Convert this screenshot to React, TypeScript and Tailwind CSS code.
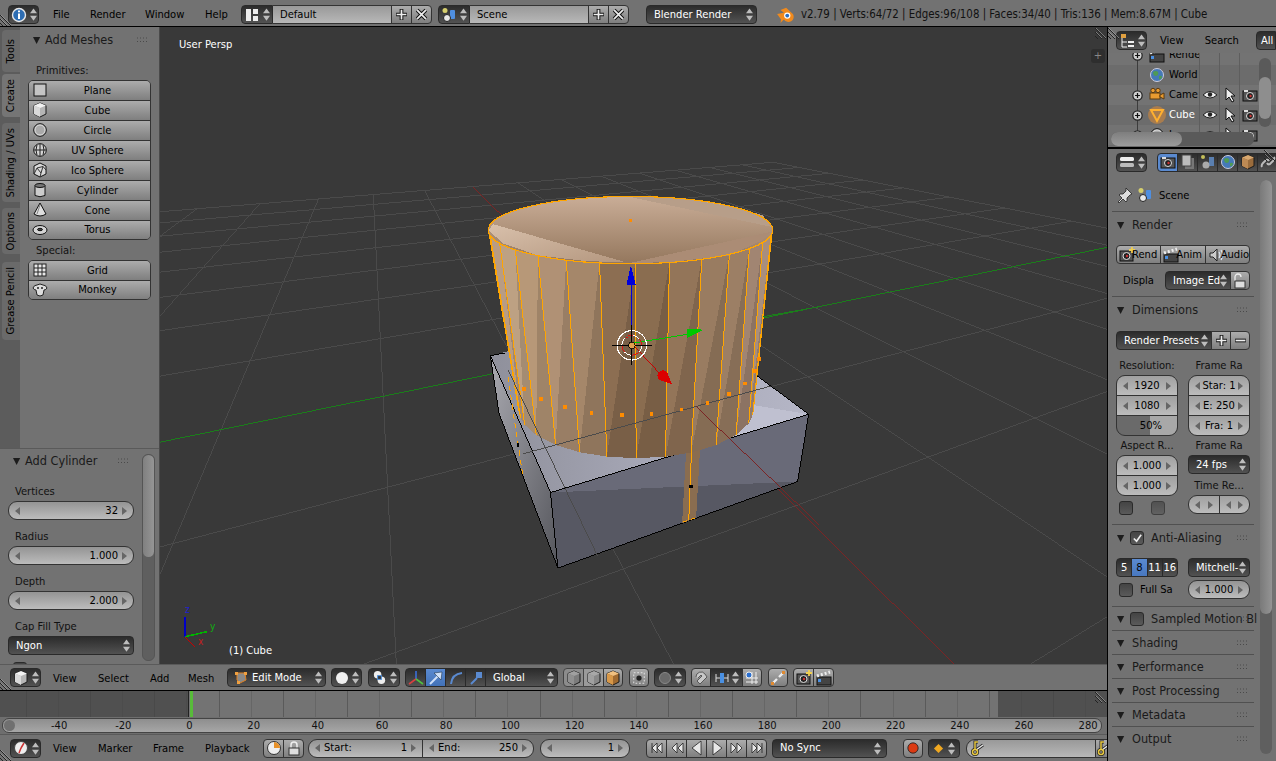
import type { ReactNode } from 'react';

const light = 'bg-linear-to-b from-[#acacac] to-[#7f7f7f] border border-[#333] text-black';
const dark = 'bg-linear-to-b from-[#2c2c2c] to-[#525252] border border-[#2a2a2a] text-white';
const num = 'bg-linear-to-b from-[#949494] to-[#bcbcbc] border border-[#333] text-black';

const I = ({ children, size = 16 }: { children: ReactNode; size?: number }) => (
    <svg viewBox="0 0 16 16" width={size} height={size} className="block shrink-0">
        {children}
    </svg>
);

const UpDown = ({ c = '#bdbdbd' }: { c?: string }) => (
    <svg viewBox="0 0 8 14" width="7" height="13" className="block shrink-0">
        <polygon points="4,0 8,5.5 0,5.5" fill={c} />
        <polygon points="4,14 8,8.5 0,8.5" fill={c} />
    </svg>
);

const Hatch = ({ className }: { className: string }) => (
    <svg viewBox="0 0 12 12" width="12" height="12" className={'absolute ' + className}>
        <path d="M0 1L11 12M0 5L7 12M0 9L3 12" stroke="#222" strokeWidth="1" />
        <path d="M1 1L11 11M1 5L7 11" stroke="#aaa" strokeWidth="0.6" />
    </svg>
);

const Tri = ({ open = true }: { open?: boolean }) => (
    <svg viewBox="0 0 10 10" width="9" height="9" className="block shrink-0">
        {open ? <polygon points="0,1 8,1 4,9" fill="#1c1c1c" /> : <polygon points="1,0 9,4.5 1,9" fill="#1c1c1c" />}
    </svg>
);

const Dots = () => (
    <svg viewBox="0 0 11 6" width="11" height="6" className="block shrink-0">
        <path d="M0 1h11M0 4.500h11" stroke="#4a4a4a" strokeDasharray="1 2" />
    </svg>
);

const Arrows = ({ c = '#666' }: { c?: string }) => (
    <>
        <svg viewBox="0 0 5 8" width="5" height="8" className="absolute left-[6px] top-1/2 -translate-y-1/2">
            <polygon points="5,0 5,8 0,4" fill={c} />
        </svg>
        <svg viewBox="0 0 5 8" width="5" height="8" className="absolute right-[6px] top-1/2 -translate-y-1/2">
            <polygon points="0,0 0,8 5,4" fill={c} />
        </svg>
    </>
);

/* icons */
const CubeIcon = ({ a = '#f2f2f2', b = '#b5b5b5', c = '#d9d9d9' }: { a?: string; b?: string; c?: string }) => (
    <I>
        <polygon points="8,1 14,3.500 14,12 8,15 2,12 2,3.500" fill={b} stroke="#1a1a1a" />
        <polygon points="8,1 14,3.500 8,6 2,3.500" fill={a} />
        <polygon points="2,3.500 8,6 8,15 2,12" fill={c} />
    </I>
);
const PlaneIcon = () => (
    <I>
        <rect x="2" y="2" width="12" height="12" fill="#c4c4c4" stroke="#111" />
    </I>
);
const CircleIcon = () => (
    <I>
        <circle cx="8" cy="8" r="6.300" fill="#aaa" stroke="#111" />
        <circle cx="8" cy="8" r="5" fill="none" stroke="#ddd" />
    </I>
);
const UvIcon = () => (
    <I>
        <circle cx="8" cy="8" r="6.300" fill="#d4d4d4" stroke="#111" />
        <path d="M2 8h12M8 2v12M5 3q-2 5 0 10M11 3q2 5 0 10" stroke="#222" fill="none" />
    </I>
);
const IcoIcon = () => (
    <I>
        <polygon points="8,1 14,4 14,12 8,15 2,12 2,4" fill="#d8d8d8" stroke="#111" />
        <path d="M5 6L11 4.500L9 11ZM5 6L2 12M9 11L8 15M11 4.500L14 8" stroke="#333" fill="none" />
    </I>
);
const CylIcon = () => (
    <I>
        <path d="M3 3.500v10q5 2.500 10 0v-10" fill="#ccc" stroke="#111" />
        <ellipse cx="8" cy="3.500" rx="5" ry="2" fill="#777" stroke="#111" />
    </I>
);
const ConeIcon = () => (
    <I>
        <path d="M8 1L2 12q6 4 12 0Z" fill="#ddd" stroke="#111" />
        <path d="M8 3L5 12" stroke="#888" />
    </I>
);
const TorusIcon = () => (
    <I>
        <ellipse cx="8" cy="8" rx="7" ry="4.500" fill="#d5d5d5" stroke="#111" />
        <ellipse cx="8" cy="7.500" rx="2.500" ry="1.200" fill="#444" stroke="#111" />
    </I>
);
const GridIcon = () => (
    <I>
        <rect x="2" y="2" width="12" height="12" fill="#e8e8e8" stroke="#222" />
        <path d="M6 2v12M10 2v12M2 6h12M2 10h12" stroke="#222" />
    </I>
);
const MonkeyIcon = () => (
    <I>
        <path d="M5 3q3-2 6 0q3 0 4 3q-1 2-3 2l-1 5q-3 2-6 0l-1-5q-2 0-3-2q1-3 4-3Z" fill="#ddd" stroke="#222" />
        <circle cx="6" cy="6" r="1" fill="#222" />
        <circle cx="10" cy="6" r="1" fill="#222" />
    </I>
);
const InfoIcon = () => (
    <I>
        <circle cx="8" cy="8" r="6.500" fill="#2d6db3" stroke="#e8e8e8" strokeWidth="1.400" />
        <path d="M8 3.500v1.800M8 6.500v5.500" stroke="#fff" strokeWidth="2" />
    </I>
);
const LayoutIcon = () => (
    <I>
        <rect x="2" y="2" width="5" height="12" fill="#eee" />
        <rect x="9" y="2" width="5" height="5" fill="#eee" />
        <rect x="9" y="9" width="5" height="5" fill="#eee" />
    </I>
);
const SceneIcon = () => (
    <I>
        <circle cx="4" cy="3.500" r="2.500" fill="#d6cf6d" />
        <rect x="9" y="3" width="5" height="9" rx="1" fill="#4f8fe0" />
        <circle cx="6" cy="11" r="3.500" fill="#e8e8e8" stroke="#222" />
    </I>
);
const Blender = () => (
    <I size={18}>
        <path d="M1 7l6-1-3-2.500 5-2 6 5.500a4.500 4.500 0 0 1-8 5l-3 3 .5-3-3.500-5Z" fill="#f08a1d" />
        <circle cx="10" cy="8.500" r="2.800" fill="#fff" />
        <circle cx="10" cy="8.500" r="1.700" fill="#2c6ebc" />
    </I>
);
const Plus = () => (
    <svg viewBox="0 0 12 12" width="13" height="13" className="block">
        <path d="M6 1v10M1 6h10" stroke="#111" strokeWidth="3.400" />
        <path d="M6 1.500v9M1.500 6h9" stroke="#eee" strokeWidth="1.600" />
    </svg>
);
const Cross = () => (
    <svg viewBox="0 0 12 12" width="13" height="13" className="block">
        <path d="M2 2l8 8M10 2l-8 8" stroke="#111" strokeWidth="3.400" />
        <path d="M2 2l8 8M10 2l-8 8" stroke="#eee" strokeWidth="1.600" />
    </svg>
);
const CameraIcon = () => (
    <I>
        <rect x="1" y="4" width="14" height="10" fill="#555" stroke="#111" />
        <rect x="2" y="3" width="4" height="2" fill="#ddd" />
        <circle cx="8" cy="9" r="3.500" fill="#222" stroke="#ddd" />
        <circle cx="8.500" cy="9" r="1.200" fill="#c33" />
    </I>
);
const RenderCam = () => (
    <I>
        <rect x="1" y="4" width="13" height="10" fill="#555" stroke="#111" />
        <circle cx="7.500" cy="9" r="3.500" fill="#222" stroke="#ddd" />
        <circle cx="8" cy="9" r="1.200" fill="#c33" />
        <path d="M13 0v6M10 3h6" stroke="#f0d050" strokeWidth="1.800" />
    </I>
);
const Clapper = () => (
    <I>
        <rect x="1" y="7" width="14" height="8" fill="#444" stroke="#111" />
        <path d="M1 6L14 2" stroke="#eee" strokeWidth="3" strokeDasharray="2 2" />
        <rect x="2" y="9" width="3" height="3" fill="#4a90e2" />
    </I>
);
const Speaker = () => (
    <I>
        <polygon points="2,6 5,6 9,2 9,14 5,10 2,10" fill="#ccc" stroke="#222" />
        <path d="M11 5q2 3 0 6M13 3q3 5 0 10" stroke="#dfe8f5" strokeWidth="1.200" fill="none" />
    </I>
);
const Pin = () => (
    <I>
        <path d="M9 1l6 6-2 1-3 3v3l-1 1-3-3-4 4-1-1 4-4-3-3 1-1h3l3-3Z" fill="#ddd" stroke="#222" strokeWidth="0.800" />
    </I>
);
const Eye = () => (
    <I>
        <path d="M1 8q7-7 14 0q-7 6-14 0Z" fill="#eee" stroke="#222" />
        <circle cx="8" cy="7.500" r="2.200" fill="#222" />
    </I>
);
const Pointer = () => (
    <I>
        <polygon points="4,1 4,13 7,10 10,15 12,14 9,9 13,9" fill="#eee" stroke="#111" />
    </I>
);
const WorldIcon = () => (
    <I>
        <circle cx="8" cy="8" r="6.500" fill="#4579b8" stroke="#ccd" />
        <path d="M4 5q3-2 5 0q1 3-2 4q-3 0-3-4ZM10 9q3-1 3 1q-1 3-3 2Z" fill="#4f9a55" />
    </I>
);
const ChainIcon = () => (
    <I>
        <path d="M2 13q-1-2 1-4l3-3q2-1 3 1M14 3q1 2-1 4l-3 3q-2 1-3-1" fill="none" stroke="#bbb" strokeWidth="2" />
    </I>
);
const CamOrange = () => (
    <I>
        <rect x="1" y="6" width="10" height="6" fill="#e89a30" stroke="#5a3a10" />
        <circle cx="4" cy="3.500" r="2.200" fill="#e89a30" stroke="#5a3a10" />
        <circle cx="9" cy="3.500" r="2.200" fill="#e89a30" stroke="#5a3a10" />
        <polygon points="11,8 15,6 15,12 11,10" fill="#e89a30" stroke="#5a3a10" />
    </I>
);
const CubeObj = () => (
    <svg viewBox="0 0 18 18" width="18" height="18" className="block shrink-0">
        <circle cx="9" cy="9" r="9" fill="#a87c4e" />
        <path d="M3 4h12L9 15Z" fill="none" stroke="#ffb030" strokeWidth="2" />
    </svg>
);
const KeyIcon = () => (
    <I>
        <path d="M6 10l7-5" stroke="#222" strokeWidth="3" fill="none" />
        <circle cx="5" cy="12" r="2.500" fill="none" stroke="#222" strokeWidth="3" />
        <path d="M5 10V2h3" stroke="#222" strokeWidth="3" fill="none" />
        <path d="M6 10l7-5" stroke="#e8e8e8" strokeWidth="1.500" fill="none" />
        <circle cx="5" cy="12" r="2.500" fill="none" stroke="#e8c840" strokeWidth="1.500" />
        <path d="M5 10V2h3" stroke="#e8c840" strokeWidth="1.500" fill="none" />
    </I>
);

/* small widgets */
const Menu = ({ items, widths }: { items: string[]; widths: string[] }) => (
    <>
        {items.map((t, i) => (
            <span key={t} className={'shrink-0 text-black ' + widths[i]}>
                {t}
            </span>
        ))}
    </>
);

const EditorBtn = ({ children }: { children: ReactNode }) => (
    <div className={'flex h-[19px] w-[31px] shrink-0 items-center justify-center gap-[3px] rounded-[4px] ' + dark}>
        {children}
        <UpDown />
    </div>
);

const Drop = ({ w, text, icon, className = '' }: { w: string; text: string; icon?: ReactNode; className?: string }) => (
    <div className={'flex h-[19px] shrink-0 items-center rounded-[4px] pl-[6px] pr-[3px] ' + dark + ' ' + w + ' ' + className}>
        {icon}
        <span className="ml-[1px] min-w-0 flex-1 overflow-hidden whitespace-nowrap">{text}</span>
        <UpDown />
    </div>
);

const Seg = ({ children, w = 'w-[21px]', cls = light, round = '' }: { children?: ReactNode; w?: string; cls?: string; round?: string }) => (
    <div className={'flex h-[19px] shrink-0 items-center justify-center -ml-px first:ml-0 ' + w + ' ' + cls + ' ' + round}>{children}</div>
);

const Field = ({ value, className = '', label, left }: { value: string; className?: string; label?: string; left?: boolean }) => (
    <div className={'relative flex h-[19px] items-center rounded-[9px] px-[15px] ' + num + ' ' + (left ? 'justify-center ' : 'justify-end ') + className}>
        <Arrows />
        {label && <span className="mr-auto">{label}</span>}
        <span>{value}</span>
    </div>
);

const Stack = ({ rows }: { rows: string[] }) => (
    <div className="flex flex-col overflow-hidden rounded-[9px] border border-[#333] bg-[#333] gap-px">
        {rows.map((r) => (
            <div key={r} className="relative flex h-[19px] items-center justify-center bg-linear-to-b from-[#a0a0a0] to-[#bcbcbc] text-black">
                <Arrows />
                {r}
            </div>
        ))}
    </div>
);

const Mesh = ({ icon, label }: { icon: ReactNode; label: string }) => (
    <div className="relative flex h-[20px] first:h-[19px] last:h-[19px] items-center justify-center border-t border-[#333] first:border-t-0 bg-linear-to-b from-[#acacac] to-[#7f7f7f] pl-[16px] text-black">
        <span className="absolute left-[3px] top-[1px]">{icon}</span>
        {label}
    </div>
);

const Section = ({ title, open, check, children, off }: { title: string; open?: boolean; check?: boolean; off?: boolean; children?: ReactNode }) => (
    <div className="border-t border-[#505050]">
        <div className={'flex items-center pl-[5px] pr-[6px] ' + (children ? 'h-[26px]' : 'h-[23px] pt-[1px]')}>
            <Tri open={open} />
            {check && (
                <span className="ml-[4px] flex h-[14px] w-[14px] shrink-0 items-center justify-center rounded-[3px] bg-linear-to-b from-[#444] to-[#5a5a5a] border border-[#2a2a2a]">
                    <svg viewBox="0 0 12 12" width="11" height="11">
                        <path d="M2 6l3 3 5-7" stroke="#eee" strokeWidth="1.800" fill="none" />
                    </svg>
                </span>
            )}
            {off && <span className="ml-[4px] h-[14px] w-[14px] shrink-0 rounded-[3px] bg-linear-to-b from-[#444] to-[#5a5a5a] border border-[#2a2a2a]" />}
            <span className={'w-0 grow whitespace-nowrap text-[12.6px] text-[#1a1a1a] ' + (check || off ? 'ml-[7px]' : 'ml-[6px]')}>{title}</span>
            <Dots />
        </div>
        {children}
    </div>
);

const Box = ({ className = '' }: { className?: string }) => <span className={'block h-[14px] w-[14px] rounded-[3px] border border-[#2a2a2a] bg-linear-to-b from-[#444] to-[#5a5a5a] ' + className} />;

/* 3D view */
const O = [633, 345];
const VX = [368, 82];
const VY = [2004, 63];
const project = (x: number, y: number) => {
    const t = -0.19 * x;
    const s = 0.077 * y;
    const w = 1 + t + s;
    return [(O[0] + t * VX[0] + s * VY[0]) / w, (O[1] + t * VX[1] + s * VY[1]) / w, w];
};
const segment = (x1: number, y1: number, x2: number, y2: number) => {
    let a = project(x1, y1);
    let b = project(x2, y2);
    const minW = 0.06;
    if (a[2] < minW || b[2] < minW) {
        if (a[2] < minW && b[2] < minW) return null;
        const k = (minW - a[2]) / (b[2] - a[2]);
        const c = project(x1 + (x2 - x1) * k, y1 + (y2 - y1) * k);
        if (a[2] < minW) a = c;
        else b = c;
    }
    return `M${a[0].toFixed(1)} ${a[1].toFixed(1)}L${b[0].toFixed(1)} ${b[1].toFixed(1)}`;
};
const gridPath = (() => {
    let d = '';
    for (let i = -8; i <= 8; i++) {
        if (i !== 0) {
            d += segment(i, -8, i, 8) ?? '';
            d += segment(-8, i, 8, i) ?? '';
        }
    }
    return d;
})();

const topY = (x: number) => 150 + 100 * Math.sqrt(Math.max(0, 1 - ((x - 483) / 427) ** 2));
const botY = (x: number) => 690 + 145 * Math.sqrt(Math.max(0, 1 - ((x - 500) / 352) ** 2));
const tops = [58, 62, 90, 137, 205, 290, 390, 497, 600, 697, 780, 840, 880, 905, 908];
const bots = [150, 153, 165, 200, 258, 330, 412, 500, 588, 665, 740, 800, 838, 850, 852];
const faceColors = ['#bda38c', '#b89c84', '#bda183', '#b79878', '#b09175', '#a5876a', '#8c6e52', '#8a6d50', '#937559', '#997c61', '#9c7f65', '#a18572', '#a88e7e', '#ae968a'];
const bottomDots = [[163, 627], [214, 657], [285, 681], [365, 698], [456, 704], [546, 701], [636, 688], [714, 668], [778, 641], [827, 610], [856, 573], [868, 536]];

const Scene3D = () => (
    <svg viewBox="160 27 948 637" className="block h-full w-full" shapeRendering="crispEdges">
        <defs>
            <linearGradient id="cap" x1="0" y1="0" x2="0" y2="1">
                <stop offset="0" stopColor="#c9ad97" />
                <stop offset="1" stopColor="#94775d" />
            </linearGradient>
            <linearGradient id="wedge" x1="0" y1="0" x2="1" y2="1">
                <stop offset="0" stopColor="#d8c0ab" />
                <stop offset="1" stopColor="#b4977f" />
            </linearGradient>
            <linearGradient id="cubeTop" x1="0" y1="0" x2="1" y2="0">
                <stop offset="0" stopColor="#8f909b" />
                <stop offset="0.5" stopColor="#a6a7b6" />
                <stop offset="1" stopColor="#b5b6c6" />
            </linearGradient>
            <linearGradient id="cubeLeft" x1="0" y1="0" x2="1" y2="1">
                <stop offset="0" stopColor="#a9a9b0" />
                <stop offset="1" stopColor="#55565c" />
            </linearGradient>
        </defs>
        <path d={gridPath} stroke="#4a4a4a" strokeWidth="1" fill="none" />
        <path d={segment(0, -8, 0, 8) ?? ''} stroke="#1b7d1b" fill="none" />
        <path d={segment(-8, 0, 2.9, 0) ?? ''} stroke="#7c2424" fill="none" />
        <g transform="translate(470 180) scale(0.33333)">
            {/* box */}
            <polygon points="62,527 600,391 1018,703 243,938" fill="url(#cubeTop)" />
            <polygon points="850,675 1018,703 790,780" fill="#bfc0d0" />
            <polygon points="243,938 1018,703 985,905 265,1165" fill="#696a78" />
            <polygon points="243,938 985,905 265,1165" fill="#575863" />
            <polygon points="62,527 243,938 265,1165 88,700" fill="url(#cubeLeft)" />
            <path d="M62 527L243 938L1018 703L985 905L265 1165L243 938M265 1165L88 700L62 527L105 519M860 585L1018 703" fill="none" stroke="#000" strokeWidth="3" />
            {/* strip of the cylinder that comes through the box */}
            <polygon points="650,815 692,805 680,1015 638,1030" fill="#8a6d50" />
            <path d="M666 815L658 1022" stroke="#ffa500" strokeWidth="3" />
            <path d="M640 1027L680 1014" stroke="#ffa500" strokeWidth="3" strokeDasharray="12 14" />
            <path d="M115 590L160 890" stroke="#ffa500" strokeWidth="3" strokeDasharray="16 12" />
            <rect x="141" y="790" width="8" height="11" fill="#000" />
            <rect x="660" y="914" width="11" height="11" fill="#000" />
            {/* cylinder sides */}
            {faceColors.map((c, i) => {
                const a = [tops[i], topY(tops[i])];
                const b = [tops[i + 1], topY(tops[i + 1])];
                const e = [bots[i + 1], botY(bots[i + 1])];
                const f = [bots[i], botY(bots[i])];
                return (
                    <g key={i}>
                        <polygon points={`${a} ${b} ${e} ${f}`} fill={c} />
                        <polygon points={`${b} ${e} ${f}`} fill="#000" opacity="0.13" />
                    </g>
                );
            })}
            {tops.map((t, i) => (
                <path key={t} d={`M${t} ${topY(t)}L${bots[i]} ${botY(bots[i])}`} stroke="#ffa500" strokeWidth="3" fill="none" />
            ))}
            {/* cap */}
            <ellipse cx="483" cy="150" rx="427" ry="101" fill="url(#cap)" />
            <polygon points="57,150 70,132 470,247 350,243 205,226 100,190" fill="url(#wedge)" />
            <polygon points="470,48 905,140 880,105 790,80 640,55" fill="#b79e89" />
            <polygon points="480,249 905,155 880,180 780,226 600,246" fill="#ab8c75" />
            <ellipse cx="483" cy="150" rx="427" ry="101" fill="none" stroke="#ffa500" strokeWidth="3.500" />
            <rect x="478" y="116" width="10" height="10" fill="#ff8c00" />
            {/* grid lines in front */}
            <path d="M160 822L905 618" stroke="#4b4b4b" strokeWidth="3" />
            <path d="M115 570L385 1130" stroke="#4b4b4b" strokeWidth="3" />
            <path d="M680 680L1050 1035" stroke="#7c2424" strokeWidth="3" />
            <path d="M880 410L1050 380" stroke="#1b7d1b" strokeWidth="3" />
            {bottomDots.map(([x, y]) => (
                <rect key={x} x={x - 5} y={y - 5} width="11" height="11" fill="#ff8c00" />
            ))}
            {/* manipulator */}
            <path d="M487 490L487 300" stroke="#0000dc" strokeWidth="3" />
            <polygon points="484,255 499,315 471,315" fill="#0000dc" />
            <path d="M487 490L660 462" stroke="#00c800" strokeWidth="3" />
            <polygon points="704,449 652,474 652,446" fill="#00c800" />
            <path d="M487 490L570 580" stroke="#c80000" strokeWidth="3" />
            <circle cx="580" cy="587" r="16" fill="#dc0000" />
            <polygon points="607,612 570,600 592,575" fill="#dc0000" />
            {/* 3d cursor */}
            <circle cx="487" cy="496" r="44" fill="none" stroke="#fff" strokeWidth="3.500" />
            <circle cx="487" cy="496" r="30" fill="none" stroke="#fff" strokeWidth="3" strokeDasharray="24 24" />
            <circle cx="487" cy="496" r="30" fill="none" stroke="#e01010" strokeWidth="3" strokeDasharray="24 24" strokeDashoffset="24" />
            <path d="M427 496H547M487 436V556" stroke="#000" strokeWidth="3" />
            <circle cx="487" cy="496" r="10" fill="#e0a050" stroke="#000" strokeWidth="2.500" />
        </g>
        {/* axis widget */}
        <path d="M185 637V617" stroke="#0000c8" strokeWidth="1.500" />
        <path d="M185 637L207 632" stroke="#00b400" strokeWidth="1.500" />
        <path d="M185 637L195 647" stroke="#c80000" strokeWidth="1" />
    </svg>
);

export default function App() {
    const ticks = ['-40', '-20', '0', '20', '40', '60', '80', '100', '120', '140', '160', '180', '200', '220', '240', '260', '280'];
    const lines = Array.from({ length: 35 }, (_, i) => i);

    return (
        <div className="relative flex h-[761px] w-[1276px] flex-col overflow-hidden bg-[#727272] font-['DejaVu_Sans_Condensed','DejaVu_Sans',sans-serif] text-[11.1px] leading-none">
            {/* top bar */}
            <header className="relative flex h-[27px] shrink-0 items-center border-b border-black bg-[#727272] pl-[8px] pt-[3px]">
                <Hatch className="left-0 bottom-0" />
                <EditorBtn>
                    <InfoIcon />
                </EditorBtn>
                <span className="w-[14px] shrink-0" />
                <Menu items={['File', 'Render', 'Window', 'Help']} widths={['w-[37px]', 'w-[55px]', 'w-[60px]', 'w-[36px]']} />
                <div className="flex">
                    <div className={'flex h-[19px] w-[32px] items-center justify-center gap-[3px] rounded-l-[4px] ' + dark}>
                        <LayoutIcon />
                        <UpDown />
                    </div>
                    <div className="flex h-[19px] w-[119px] items-center bg-linear-to-b from-[#999] to-[#b8b8b8] border-y border-r border-[#333] pl-[7px] text-black">Default</div>
                    <Seg>
                        <Plus />
                    </Seg>
                    <Seg round="rounded-r-[4px]">
                        <Cross />
                    </Seg>
                </div>
                <div className="ml-[6px] flex">
                    <div className={'flex h-[19px] w-[32px] items-center justify-center gap-[3px] rounded-l-[4px] ' + dark}>
                        <SceneIcon />
                        <UpDown />
                    </div>
                    <div className="flex h-[19px] w-[119px] items-center bg-linear-to-b from-[#999] to-[#b8b8b8] border-y border-r border-[#333] pl-[7px] text-black">Scene</div>
                    <Seg>
                        <Plus />
                    </Seg>
                    <Seg round="rounded-r-[4px]">
                        <Cross />
                    </Seg>
                </div>
                <Drop w="w-[111px]" text="Blender Render" className="ml-[17px]" />
                <span className="ml-[19px]">
                    <Blender />
                </span>
                <span className="ml-[7px] whitespace-nowrap text-[11.4px] text-[#111]">v2.79 | Verts:64/72 | Edges:96/108 | Faces:34/40 | Tris:136 | Mem:8.67M | Cube</span>
            </header>

            <div className="flex min-h-0 flex-1">
                {/* left: 3D view and timeline */}
                <div className="flex w-[1107px] shrink-0 flex-col">
                    <div className="flex h-[637px] shrink-0">
                        <aside className="flex w-[160px] shrink-0 flex-col border-r border-[#4a4a4a]">
                            <div className="flex h-[421px] shrink-0">
                                <nav className="flex w-[20px] shrink-0 flex-col items-end bg-[#5c5c5c] text-black">
                                    {[
                                        ['Tools', 'h-[42px] mt-[3px] bg-[#6a6a6a]'],
                                        ['Create', 'h-[43px] mt-[2px] bg-[#757575]'],
                                        ['Shading / UVs', 'h-[79px] mt-[6px] bg-[#6a6a6a]'],
                                        ['Options', 'h-[46px] mt-[6px] bg-[#6a6a6a]'],
                                        ['Grease Pencil', 'h-[78px] mt-[8px] bg-[#6a6a6a]'],
                                    ].map(([t, c]) => (
                                        <div key={t} className={'flex w-[18px] items-center justify-center rounded-l-[4px] ' + c}>
                                            <span className="whitespace-nowrap [writing-mode:vertical-rl] rotate-180">{t}</span>
                                        </div>
                                    ))}
                                </nav>
                                <div className="flex-1 bg-[#727272] pl-[8px] pr-[8px]">
                                    <div className="flex h-[26px] items-center pl-[5px] pr-[3px]">
                                        <Tri />
                                        <span className="ml-[3px] text-[12.6px] text-[#1a1a1a]">Add Meshes</span>
                                        <span className="ml-auto">
                                            <Dots />
                                        </span>
                                    </div>
                                    <div className="mt-[12px] h-[12px] pl-[8px] text-[#111]">Primitives:</div>
                                    <div className="mt-[3px] w-[123px] overflow-hidden rounded-[5px] border border-[#333]">
                                        <Mesh icon={<PlaneIcon />} label="Plane" />
                                        <Mesh icon={<CubeIcon />} label="Cube" />
                                        <Mesh icon={<CircleIcon />} label="Circle" />
                                        <Mesh icon={<UvIcon />} label="UV Sphere" />
                                        <Mesh icon={<IcoIcon />} label="Ico Sphere" />
                                        <Mesh icon={<CylIcon />} label="Cylinder" />
                                        <Mesh icon={<ConeIcon />} label="Cone" />
                                        <Mesh icon={<TorusIcon />} label="Torus" />
                                    </div>
                                    <div className="mt-[5px] h-[11px] pl-[8px] text-[#111]">Special:</div>
                                    <div className="mt-[4px] w-[123px] overflow-hidden rounded-[5px] border border-[#333]">
                                        <Mesh icon={<GridIcon />} label="Grid" />
                                        <Mesh icon={<MonkeyIcon />} label="Monkey" />
                                    </div>
                                </div>
                            </div>
                            {/* redo panel */}
                            <div className="relative flex-1 overflow-hidden border-t border-[#5a5a5a] bg-[#727272] pl-[8px]">
                                <div className="flex h-[24px] w-[124px] items-center pl-[5px] pr-[3px]">
                                    <Tri />
                                    <span className="ml-[3px] text-[12.6px] text-[#1a1a1a]">Add Cylinder</span>
                                    <span className="ml-auto">
                                        <Dots />
                                    </span>
                                </div>
                                <div className="w-[126px]">
                                    <div className="mt-[13px] h-[11px] pl-[7px] text-[#111]">Vertices</div>
                                    <Field className="mt-[4px]" value="32" />
                                    <div className="mt-[11px] h-[11px] pl-[7px] text-[#111]">Radius</div>
                                    <Field className="mt-[4px]" value="1.000" />
                                    <div className="mt-[11px] h-[11px] pl-[7px] text-[#111]">Depth</div>
                                    <Field className="mt-[4px]" value="2.000" />
                                    <div className="mt-[11px] h-[11px] pl-[7px] text-[#111]">Cap Fill Type</div>
                                    <Drop w="w-[126px]" text="Ngon" className="mt-[4px]" />
                                    <Box className="ml-[5px] mt-[7px]" />
                                </div>
                                <div className="absolute left-[142px] top-[5px] h-[207px] w-[13px] rounded-[6px] bg-[#5f5f5f] border border-[#555]">
                                    <div className="h-[102px] rounded-[6px] bg-linear-to-r from-[#808080] to-[#959595]" />
                                </div>
                            </div>
                        </aside>
                        <main className="relative flex-1 bg-[#393939]">
                            <Scene3D />
                            <span className="absolute left-[19px] top-[12px] text-white">User Persp</span>
                            <span className="absolute left-[69px] top-[618px] text-white">(1) Cube</span>
                            <span className="absolute left-[25px] top-[578px] text-[10px] text-[#2020d0]">z</span>
                            <span className="absolute left-[50px] top-[595px] text-[10px] text-[#10b010]">y</span>
                            <span className="absolute left-[38px] top-[610px] text-[10px] text-[#c02020]">x</span>
                            <div className="absolute right-[2px] top-[22px] flex h-[14px] w-[14px] items-center justify-center rounded-[3px] bg-[#2e2e2e] text-[#888]">+</div>
                            <Hatch className="right-0 top-0" />
                        </main>
                    </div>

                    {/* 3D header */}
                    <div className="relative flex h-[26px] shrink-0 items-center border-t border-[#5a5a5a] pl-[10px]">
                        <Hatch className="left-0 bottom-0" />
                        <EditorBtn>
                            <CubeIcon />
                        </EditorBtn>
                        <span className="w-[12px] shrink-0" />
                        <Menu items={['View', 'Select', 'Add', 'Mesh']} widths={['w-[45px] pt-[2px]', 'w-[52px] pt-[2px]', 'w-[38px] pt-[2px]', 'w-[39px] pt-[2px]']} />
                        <Drop
                            w="w-[99px]"
                            text="Edit Mode"
                            icon={
                                <svg viewBox="0 0 14 14" width="14" height="14" className="mr-[3px] shrink-0">
                                    <path d="M3 2h8l1 7-6 3-3-3Z" fill="#8a8a8a" stroke="#e08020" />
                                    <rect x="1" y="1" width="3" height="3" fill="#f0a040" />
                                    <rect x="10" y="1" width="3" height="3" fill="#f0a040" />
                                    <rect x="3" y="10" width="3" height="3" fill="#f0a040" />
                                </svg>
                            }
                        />
                        <div className={'ml-[5px] flex h-[19px] w-[31px] items-center justify-center gap-[3px] rounded-[4px] ' + dark}>
                            <svg viewBox="0 0 14 14" width="14" height="14">
                                <circle cx="7" cy="7" r="6" fill="#f0f0f0" />
                            </svg>
                            <UpDown />
                        </div>
                        <div className={'ml-[6px] flex h-[19px] w-[32px] items-center justify-center gap-[3px] rounded-[4px] ' + dark}>
                            <svg viewBox="0 0 16 16" width="15" height="15">
                                <circle cx="6" cy="5" r="4" fill="#eee" />
                                <circle cx="10" cy="11" r="4" fill="#eee" />
                                <rect x="6" y="6" width="4" height="4" fill="#333" stroke="#4a90e2" />
                            </svg>
                            <UpDown />
                        </div>
                        <div className="ml-[5px] flex">
                            <Seg cls={dark} round="rounded-l-[4px]">
                                <svg viewBox="0 0 16 16" width="16" height="16">
                                    <path d="M8 9V1" stroke="#3a6fd8" strokeWidth="1.600" />
                                    <path d="M8 9L1 14" stroke="#d84040" strokeWidth="1.600" />
                                    <path d="M8 9L15 14" stroke="#50c040" strokeWidth="1.600" />
                                </svg>
                            </Seg>
                            <Seg cls="bg-linear-to-b from-[#5a8ad0] to-[#4272b8] border border-[#2a2a2a]">
                                <svg viewBox="0 0 16 16" width="16" height="16">
                                    <path d="M2 14L11 5" stroke="#cfe0f8" strokeWidth="2" />
                                    <polygon points="14,2 13,10 6,3" fill="#cfe0f8" stroke="#123" strokeWidth="0.500" />
                                </svg>
                            </Seg>
                            <Seg cls={dark}>
                                <svg viewBox="0 0 16 16" width="16" height="16">
                                    <path d="M3 14Q4 4 14 3" stroke="#5a8ad0" strokeWidth="2" fill="none" />
                                </svg>
                            </Seg>
                            <Seg cls={dark}>
                                <svg viewBox="0 0 16 16" width="16" height="16">
                                    <path d="M3 14L9 8" stroke="#5a8ad0" strokeWidth="2" />
                                    <rect x="8" y="2" width="6" height="6" fill="#5a8ad0" />
                                </svg>
                            </Seg>
                            <Drop w="w-[73px]" text="Global" className="-ml-px rounded-l-none" />
                        </div>
                        <div className="ml-[5px] flex">
                            <Seg cls="bg-[#8c8c8c] border border-[#444]" round="rounded-l-[4px]">
                                <CubeIcon a="#a0a0a0" b="#7c7c7c" c="#909090" />
                            </Seg>
                            <Seg cls="bg-[#9a9a9a] border border-[#444]">
                                <CubeIcon a="#a8a8a8" b="#888" c="#a0a0a0" />
                            </Seg>
                            <Seg w="w-[20px]" round="rounded-r-[4px]">
                                <CubeIcon a="#f0c080" b="#a06a30" c="#d89848" />
                            </Seg>
                        </div>
                        <Seg w="ml-[6px] w-[20px]" round="rounded-[4px]">
                            <svg viewBox="0 0 16 16" width="14" height="14">
                                <rect x="2" y="2" width="12" height="12" fill="none" stroke="#eee" strokeDasharray="2 2" />
                                <circle cx="8" cy="8" r="3" fill="#222" />
                            </svg>
                        </Seg>
                        <div className={'ml-[5px] flex h-[19px] w-[32px] items-center justify-center gap-[3px] rounded-[4px] ' + dark}>
                            <svg viewBox="0 0 14 14" width="14" height="14">
                                <circle cx="7" cy="7" r="5.500" fill="#6a6a6a" stroke="#888" />
                            </svg>
                            <UpDown />
                        </div>
                        <div className="ml-[5px] flex">
                            <Seg w="w-[20px]" round="rounded-l-[4px]">
                                <svg viewBox="0 0 16 16" width="16" height="16">
                                    <path d="M3 7a5 5 0 0 1 9-3l2 3-7 7-3-3 5-5-1-1-3 3" fill="#c8c8c8" stroke="#333" strokeWidth="0.700" />
                                </svg>
                            </Seg>
                            <div className={'-ml-px flex h-[19px] w-[33px] items-center justify-center gap-[2px] ' + dark}>
                                <svg viewBox="0 0 16 16" width="16" height="16">
                                    <path d="M2 4v8M14 4v8M2 8h12" stroke="#ddd" />
                                    <rect x="6" y="3" width="4" height="10" fill="#4a90e2" />
                                </svg>
                                <UpDown />
                            </div>
                            <Seg w="w-[20px]" round="rounded-r-[4px]">
                                <svg viewBox="0 0 16 16" width="16" height="16">
                                    <path d="M2 8h12M2 12h12M8 2v12M12 2v12" stroke="#eee" />
                                    <circle cx="5" cy="5" r="3" fill="#2a6fd0" stroke="#eee" />
                                </svg>
                            </Seg>
                        </div>
                        <Seg w="ml-[6px] w-[20px]" round="rounded-[4px]">
                            <svg viewBox="0 0 16 16" width="16" height="16">
                                <path d="M2 14L7 9M14 2L9 7" stroke="#eee" strokeWidth="2.400" />
                                <rect x="1" y="12" width="3" height="3" fill="#e08a30" />
                                <rect x="12" y="1" width="3" height="3" fill="#e08a30" />
                            </svg>
                        </Seg>
                        <div className="ml-[5px] flex">
                            <Seg round="rounded-l-[4px]">
                                <RenderCam />
                            </Seg>
                            <Seg round="rounded-r-[4px]">
                                <Clapper />
                            </Seg>
                        </div>
                    </div>

                    {/* timeline */}
                    <div className="relative flex h-[27px] shrink-0 overflow-hidden border-t border-black bg-[#737373] pl-[26px]">
                        {lines.map((i) => (
                            <span key={i} className={'h-full w-[32.1px] shrink-0 border-l ' + (i % 2 === 0 ? 'border-[#5a5a5a]' : 'border-[#666]')} />
                        ))}
                        <div className="absolute inset-y-0 left-0 w-[188px] bg-[#444]/75" />
                        <div className="absolute inset-y-0 left-[998px] right-0 bg-[#444]/75" />
                        <div className="absolute inset-y-0 left-[188px] w-[5px] border-l border-[#222] bg-[#58bb3a] bg-clip-content pl-[1px]" />
                        <Hatch className="right-0 top-0" />
                    </div>
                    <div className="flex h-[17px] shrink-0 items-center bg-[#6e6e6e] px-[2px]">
                        <div className="relative flex h-[15px] w-[1100px] items-center rounded-[7px] border border-[#444] bg-linear-to-b from-[#8e8e8e] to-[#a6a6a6] pl-[26px] text-[#111]">
                            <span className="absolute left-[1px] h-[11px] w-[11px] rounded-full bg-[#707070]" />
                            {ticks.map((t) => (
                                <span key={t} className={'w-[64.2px] shrink-0 text-center ' + (t.startsWith('-') ? 'relative right-[2px]' : '')}>
                                    {t}
                                </span>
                            ))}
                        </div>
                    </div>

                    {/* timeline header */}
                    <div className="relative flex min-h-0 flex-1 items-center border-t border-[#5a5a5a] pl-[10px]">
                        <Hatch className="left-0 bottom-0" />
                        <EditorBtn>
                            <I>
                                <circle cx="8" cy="8" r="6.500" fill="#eee" stroke="#444" />
                                <path d="M8 8L11 3M8 8L6 13" stroke="#c33" strokeWidth="1.500" />
                            </I>
                        </EditorBtn>
                        <span className="w-[12px] shrink-0" />
                        <Menu items={['View', 'Marker', 'Frame', 'Playback']} widths={['w-[45px] pt-[2px]', 'w-[55px] pt-[2px]', 'w-[52px] pt-[2px]', 'w-[58px] pt-[2px]']} />
                        <div className="flex">
                            <Seg round="rounded-l-[4px]">
                                <I>
                                    <circle cx="8" cy="8" r="6.500" fill="#eee" stroke="#333" />
                                    <path d="M8 8V2A6 6 0 0 1 14 8Z" fill="#e8922a" />
                                </I>
                            </Seg>
                            <Seg round="rounded-r-[4px]">
                                <I>
                                    <path d="M5 8V5a3 3 0 0 1 6 0v3" fill="none" stroke="#eee" strokeWidth="1.500" />
                                    <rect x="3" y="8" width="10" height="7" fill="#ddd" stroke="#333" />
                                </I>
                            </Seg>
                        </div>
                        <div className="ml-[4px] flex">
                            <Field className="w-[115px] rounded-r-none" label="Start:" value="1" />
                            <Field className="-ml-px w-[112px] rounded-l-none" label="End:" value="250" />
                        </div>
                        <Field className="ml-[6px] w-[90px]" value="1" />
                        <div className="ml-[16px] flex">
                            {[
                                'M3 3v10M13 3L8 8l5 5ZM8 3L3 8l5 5Z',
                                'M14 3L9 8l5 5ZM8 3L3 8l5 5Z',
                                'M12 1L3 8l9 7Z',
                                'M4 1l9 7-9 7Z',
                                'M2 3l5 5-5 5ZM8 3l5 5-5 5Z',
                                'M13 3v10M3 3l5 5-5 5ZM8 3l5 5-5 5Z',
                            ].map((d, i) => (
                                <Seg key={d} round={i === 0 ? 'rounded-l-[4px]' : i === 5 ? 'rounded-r-[4px]' : ''}>
                                    <I>
                                        <path d={d} fill="#e8e8e8" stroke="#222" strokeWidth="0.800" />
                                    </I>
                                </Seg>
                            ))}
                        </div>
                        <Drop w="w-[115px]" text="No Sync" className="ml-[5px] pr-[5px]" />
                        <Seg w="ml-[16px] w-[20px]" round="rounded-[4px]">
                            <svg viewBox="0 0 14 14" width="12" height="12">
                                <circle cx="7" cy="7" r="6" fill="#dc3a12" stroke="#222" />
                            </svg>
                        </Seg>
                        <div className={'ml-[5px] flex h-[19px] w-[32px] items-center justify-center gap-[4px] rounded-[4px] ' + dark}>
                            <svg viewBox="0 0 12 12" width="11" height="11">
                                <polygon points="6,1 11,6 6,11 1,6" fill="#f0a820" />
                            </svg>
                            <UpDown />
                        </div>
                        <div className="ml-[6px] flex h-[19px] w-[130px] shrink-0 items-center rounded-l-[9px] border border-[#333] bg-linear-to-b from-[#999] to-[#b8b8b8] pl-[3px]">
                            <KeyIcon />
                        </div>
                        <div className="-ml-px flex h-[19px] flex-1 items-center overflow-hidden border-y border-l border-[#333] bg-linear-to-b from-[#acacac] to-[#7f7f7f]">
                            <KeyIcon />
                        </div>
                    </div>
                </div>

                {/* right column */}
                <div className="flex min-w-0 flex-1 flex-col border-l border-black">
                    <div className="relative flex h-[122px] shrink-0 flex-col border-b-2 border-black">
                        <Hatch className="left-0 top-0" />
                        <Hatch className="left-0 bottom-0" />
                        <div className="flex h-[26px] shrink-0 items-center pl-[8px] pt-[1px]">
                            <EditorBtn>
                                <I>
                                    <rect x="2" y="1" width="5" height="4" fill="#e0a040" />
                                    <path d="M3 5v9h5M3 9h5" stroke="#eee" fill="none" />
                                    <rect x="9" y="8" width="6" height="2" fill="#eee" />
                                    <rect x="9" y="12" width="6" height="2" fill="#eee" />
                                </I>
                            </EditorBtn>
                            <span className="ml-[13px] text-black">View</span>
                            <span className="ml-[21px] text-black">Search</span>
                            <div className={'ml-auto flex h-[19px] w-[20px] items-center justify-start rounded-l-[4px] pl-[4px] ' + dark}>All</div>
                        </div>
                        <div className="relative min-h-0 flex-1 overflow-hidden bg-[#6c6c6c]">
                            <div className="-mt-[8px]">
                                {[
                                    { t: 'Rende', icon: <Clapper />, bg: 'bg-[#737373]', plus: true },
                                    { t: 'World', icon: <WorldIcon />, bg: 'bg-[#6c6c6c]' },
                                    { t: 'Came', icon: <CamOrange />, bg: 'bg-[#737373]', plus: true, vis: true },
                                    { t: 'Cube', icon: <CubeObj />, bg: 'bg-[#6c6c6c]', plus: true, vis: true, on: true },
                                    { t: 'Lamp', icon: <CircleIcon />, bg: 'bg-[#737373]', plus: true, vis: true },
                                ].map((r) => (
                                    <div key={r.t} className={'relative flex h-[20px] items-center ' + r.bg}>
                                        <span className="absolute left-[29px] top-0 h-[20px] w-px bg-[#3c3c3c]" />
                                        <span className="relative flex w-[35px] shrink-0 justify-end">
                                            {r.plus && (
                                                <svg viewBox="0 0 9 9" width="11" height="11">
                                                    <circle cx="4.500" cy="4.500" r="3.800" fill="#cfcfcf" stroke="#222" />
                                                    <path d="M2.500 4.500h4M4.500 2.500v4" stroke="#111" />
                                                </svg>
                                            )}
                                        </span>
                                        <span className="flex w-[26px] shrink-0 justify-center pl-[2px]">{r.icon}</span>
                                        <span className={'w-[30px] shrink-0 overflow-hidden whitespace-nowrap ' + (r.on ? 'text-white' : 'text-black')}>{r.t}</span>
                                        {[<Eye key="e" />, <Pointer key="p" />, <CameraIcon key="c" />].map((ic, i) => (
                                            <span key={i} className="flex h-[20px] w-[20px] shrink-0 items-center justify-center border-l border-[#5e5e5e]">
                                                {r.vis && ic}
                                            </span>
                                        ))}
                                    </div>
                                ))}
                            </div>
                            <div className="absolute right-[5px] top-[5px] h-[69px] w-[12px] rounded-[6px] bg-[#5a5a5a]">
                                <div className="mt-[19px] h-[42px] rounded-[6px] bg-[#8e8e8e]" />
                            </div>
                            <div className="absolute bottom-[1px] left-[3px] h-[14px] w-[143px] rounded-[7px] bg-[#5a5a5a]">
                                <div className="h-[14px] w-[71px] rounded-[7px] bg-linear-to-b from-[#7e7e7e] to-[#9c9c9c]" />
                            </div>
                        </div>
                    </div>

                    <div className="relative flex h-[26px] shrink-0 items-center pl-[8px]">
                        <Hatch className="right-0 top-0" />
                        <EditorBtn>
                            <I>
                                <rect x="1" y="3" width="14" height="4" rx="1.500" fill="#eee" />
                                <rect x="1" y="9" width="14" height="4" rx="1.500" fill="#bbb" />
                            </I>
                        </EditorBtn>
                        <div className="ml-[10px] flex">
                            <Seg cls="bg-[#5a8ad0] border border-[#2a2a2a]" round="rounded-l-[4px]">
                                <CameraIcon />
                            </Seg>
                            <Seg cls={dark}>
                                <I>
                                    <rect x="5" y="4" width="9" height="11" fill="#777" />
                                    <rect x="2" y="1" width="9" height="11" fill="#bbb" stroke="#444" />
                                </I>
                            </Seg>
                            <Seg cls={dark}>
                                <I>
                                    <circle cx="3" cy="3" r="2" fill="#c4bf5a" />
                                    <rect x="9" y="3" width="5" height="9" fill="#5a7fb0" />
                                    <circle cx="6" cy="11" r="3.500" fill="#aaa" />
                                </I>
                            </Seg>
                            <Seg cls={dark}>
                                <WorldIcon />
                            </Seg>
                            <Seg cls={dark}>
                                <CubeIcon a="#d8a870" b="#9a6c3c" c="#bd8a54" />
                            </Seg>
                            <Seg cls={dark}>
                                <ChainIcon />
                            </Seg>
                        </div>
                    </div>

                    <div className="relative min-h-0 flex-1 overflow-hidden pl-[4px]">
                        <div className="w-[142px] pt-[10px]">
                            <div className="flex h-[20px] items-center pl-[5px]">
                                <Pin />
                                <span className="ml-[4px]">
                                    <SceneIcon />
                                </span>
                                <span className="ml-[6px] mt-[2px] text-black">Scene</span>
                            </div>
                            <div className="h-[6px]" />
                            <Section title="Render" open>
                                <div className="px-[4px] pb-[6px]">
                                    <div className="mt-[7px] flex">
                                        {[
                                            ['Rend', <RenderCam key="a" />],
                                            ['Anim', <Clapper key="b" />],
                                            ['Audio', <Speaker key="c" />],
                                        ].map(([t, ic], i) => (
                                            <div key={t as string} className={'-ml-px first:ml-0 flex h-[19px] w-[45px] flex-1 items-center overflow-hidden pl-[2px] ' + light + (i === 0 ? ' rounded-l-[4px]' : i === 2 ? ' rounded-r-[4px]' : '')}>
                                                {ic}
                                                <span className="-ml-[3px] whitespace-nowrap">{t}</span>
                                            </div>
                                        ))}
                                    </div>
                                    <div className="mt-[7px] flex items-center">
                                        <span className="w-[49px] pl-[7px] text-black">Displa</span>
                                        <Drop w="w-[66px]" text="Image Ed" className="rounded-r-none" />
                                        <Seg w="-ml-px w-[20px]" round="rounded-r-[4px]">
                                            <I>
                                                <path d="M3 8V4a3 3 0 0 1 6 0" fill="none" stroke="#eee" strokeWidth="1.300" />
                                                <rect x="3" y="8" width="10" height="7" fill="#ddd" stroke="#333" />
                                            </I>
                                        </Seg>
                                    </div>
                                </div>
                            </Section>
                            <Section title="Dimensions" open>
                                <div className="px-[4px] pb-[9px]">
                                    <div className="mt-[8px] flex">
                                        <Drop w="w-[96px]" text="Render Presets" className="rounded-r-none pl-[5px]" />
                                        <Seg w="-ml-px w-[20px]">
                                            <Plus />
                                        </Seg>
                                        <Seg w="w-[20px]" round="rounded-r-[4px]">
                                            <svg viewBox="0 0 12 12" width="13" height="13">
                                                <path d="M1 6h10" stroke="#111" strokeWidth="3.400" />
                                                <path d="M1.500 6h9" stroke="#eee" strokeWidth="1.600" />
                                            </svg>
                                        </Seg>
                                    </div>
                                    <div className="mt-[10px] grid grid-cols-[62px_62px] gap-x-[10px] text-[#111]">
                                        <div>
                                            <div className="h-[12px] text-center">Resolution:</div>
                                            <div className="mt-[3px]">
                                                <div className="flex flex-col gap-px overflow-hidden rounded-[9px] border border-[#333] bg-[#333]">
                                                    {['1920', '1080'].map((r) => (
                                                        <div key={r} className="relative flex h-[19px] items-center justify-center bg-linear-to-b from-[#a0a0a0] to-[#bcbcbc] text-black">
                                                            <Arrows />
                                                            {r}
                                                        </div>
                                                    ))}
                                                    <div className="relative flex h-[19px] items-center justify-end bg-linear-to-r from-[#6a6a6a] from-[55%] to-[#a8a8a8] to-[55%] pr-[15px] text-black">50%</div>
                                                </div>
                                            </div>
                                            <div className="mt-[4px] h-[12px] text-center">Aspect R...</div>
                                            <div className="mt-[3px]">
                                                <Stack rows={['1.000', '1.000 ']} />
                                            </div>
                                            <div className="mt-[5px] flex justify-between px-[3px]">
                                                <Box />
                                                <Box className="mr-[10px] opacity-70" />
                                            </div>
                                        </div>
                                        <div>
                                            <div className="h-[12px] text-center">Frame Ra</div>
                                            <div className="mt-[3px]">
                                                <Stack rows={['Star: 1', 'E: 250', 'Fra:  1']} />
                                            </div>
                                            <div className="mt-[4px] h-[12px] text-center">Frame Ra</div>
                                            <Drop w="w-[62px]" text="24 fps" className="mt-[3px]" />
                                            <div className="mt-[6px] h-[12px] text-center">Time Re...</div>
                                            <div className="relative mt-[3px] flex h-[19px] rounded-[9px] border border-[#333] bg-linear-to-b from-[#a0a0a0] to-[#bcbcbc]">
                                                <span className="relative flex-1 border-r border-[#333]">
                                                    <Arrows />
                                                </span>
                                                <span className="relative flex-1">
                                                    <Arrows />
                                                </span>
                                            </div>
                                        </div>
                                    </div>
                                </div>
                            </Section>
                            <Section title="Anti-Aliasing" open check>
                                <div className="grid grid-cols-[62px_62px] gap-x-[10px] gap-y-[3px] px-[4px] pb-[7px] pt-[7px]">
                                    <div className="flex">
                                        <Seg w="flex-1" cls={dark} round="rounded-l-[4px]">
                                            5
                                        </Seg>
                                        <Seg w="flex-1" cls="bg-linear-to-b from-[#5a8ad0] to-[#4878c0] border border-[#2a2a2a] text-black">8</Seg>
                                        <Seg w="flex-1" cls={dark}>
                                            11
                                        </Seg>
                                        <Seg w="flex-1" cls={dark} round="rounded-r-[4px]">
                                            16
                                        </Seg>
                                    </div>
                                    <Drop w="w-[62px]" text="Mitchell-" />
                                    <div className="flex items-center pl-[3px] text-black">
                                        <Box />
                                        <span className="ml-[7px]">Full Sa</span>
                                    </div>
                                    <Field value="1.000" left />
                                </div>
                            </Section>
                            <Section title="Sampled Motion Bl" off />
                            <Section title="Shading" />
                            <Section title="Performance" />
                            <Section title="Post Processing" />
                            <Section title="Metadata" />
                            <Section title="Output" open />
                        </div>
                        <div className="absolute left-[152px] top-[5px] h-[574px] w-[12px] rounded-[6px] bg-[#5f5f5f]">
                            <div className="h-[434px] rounded-[6px] bg-linear-to-r from-[#7a7a7a] to-[#949494]" />
                        </div>
                    </div>
                </div>
            </div>
        </div>
    );
}
